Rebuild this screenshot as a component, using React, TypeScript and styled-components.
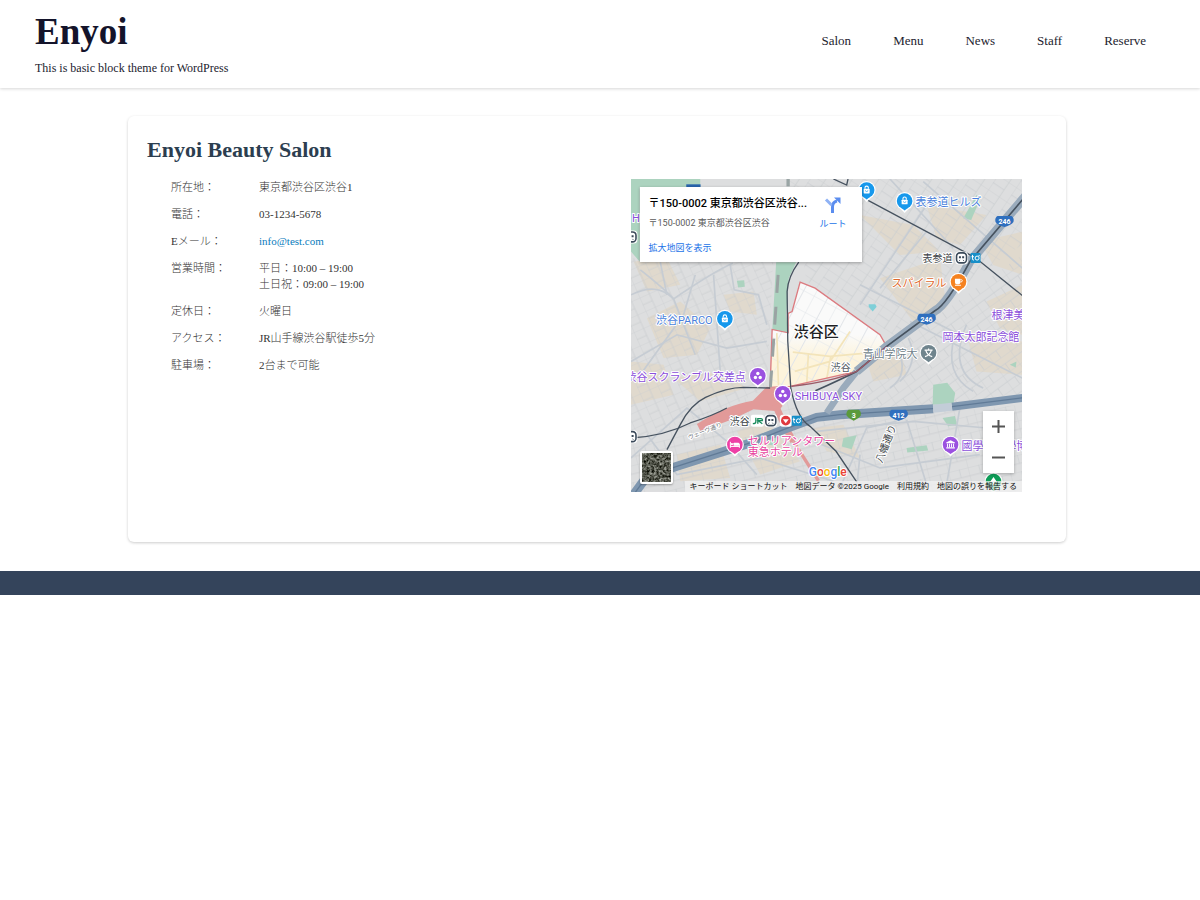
import React from "react";
import styled, { createGlobalStyle } from "styled-components";

const serif = '"Liberation Serif", "Noto Sans CJK JP", serif';
const sans = 'Roboto, "Noto Sans CJK JP", sans-serif';

const GlobalStyle = createGlobalStyle`
  *, *::before, *::after { box-sizing: border-box; }
  body {
    margin: 0;
    background: #fff;
    color: #333;
    font-family: ${serif};
  }
`;

const Header = styled.header`
  display: flex;
  justify-content: space-between;
  align-items: center;
  padding: 9px 54px 12px 35px;
  background: #fff;
  box-shadow: 0 1px 3px rgba(0, 0, 0, 0.16);
`;

const Brand = styled.div`
  display: flex;
  flex-direction: column;
  gap: 6px;
`;

const SiteTitle = styled.p`
  margin: 0;
  font-size: 37px;
  line-height: 45px;
  font-weight: 700;
  color: #14142b;
`;

const Tagline = styled.p`
  margin: 0;
  font-size: 12px;
  line-height: 16px;
  color: #22222e;
`;

const Nav = styled.nav`
  padding-bottom: 6px;
`;

const NavList = styled.ul`
  display: flex;
  gap: 42px;
  margin: 0;
  padding: 0;
  list-style: none;
`;

const NavLink = styled.a`
  font-size: 13px;
  line-height: 16px;
  color: #22222e;
  text-decoration: none;
`;

const Main = styled.main`
  padding: 28px 134px 29px 128px;
`;

const Card = styled.section`
  padding: 20px 0 50px;
  border-radius: 6px;
  background: #fff;
  box-shadow: 0 1px 3px rgba(0, 0, 0, 0.2);
`;

const CardTitle = styled.h1`
  margin: 0 0 15px;
  padding: 0 19px;
  font-size: 22px;
  line-height: 28px;
  font-weight: 700;
  color: #2c3e50;
`;

const CardBody = styled.div`
  display: grid;
  grid-template-columns: minmax(0, 1fr) 46%;
  padding: 0 44px 0 43px;
`;

const Details = styled.dl`
  display: flex;
  flex-direction: column;
  gap: 11px;
  margin: 0;
`;

const DetailRow = styled.div`
  display: grid;
  grid-template-columns: 88px 1fr;
  font-size: 11px;
  line-height: 16px;
`;

const Term = styled.dt`
  font-weight: 300;
  color: #333;
`;

const Value = styled.dd`
  margin: 0;
  font-weight: 300;
  color: #333;
`;

const MailLink = styled.a`
  color: #0a7cbd;
  text-decoration: none;
`;

const MapFrame = styled.div`
  position: relative;
  aspect-ratio: 392 / 313;
  overflow: hidden;
  background: #dedfe0;
  font-family: ${sans};
`;

const MapCanvas = styled.svg`
  display: block;
  width: 100%;
  height: 100%;
`;

const PlaceCard = styled.div`
  position: absolute;
  top: 8px;
  left: 9px;
  display: flex;
  justify-content: space-between;
  width: 222px;
  height: 75px;
  padding: 9px 15px 0 9px;
  background: #fff;
  box-shadow: 0 1px 3px rgba(0, 0, 0, 0.3);
`;

const PlaceText = styled.div`
  display: flex;
  flex-direction: column;
  align-items: flex-start;
  white-space: nowrap;
`;

const PlaceName = styled.strong`
  font-size: 11px;
  line-height: 16px;
  font-weight: 500;
  color: #000;
`;

const PlaceAddress = styled.span`
  margin-top: 3px;
  font-size: 9px;
  line-height: 16px;
  color: #5b5b5b;
`;

const MapLink = styled.a`
  font-size: 9px;
  line-height: 16px;
  color: #1a73e8;
  text-decoration: none;
`;

const LargerMapLink = styled(MapLink)`
  margin-top: 9px;
`;

const RouteLink = styled(MapLink)`
  display: flex;
  flex-direction: column;
  align-items: center;
  gap: 2px;
`;

const ZoomControls = styled.div`
  position: absolute;
  right: 8px;
  bottom: 19px;
  width: 31px;
  background: #fff;
  box-shadow: 0 1px 3px rgba(0, 0, 0, 0.25);
`;

const ZoomButton = styled.button`
  display: flex;
  align-items: center;
  justify-content: center;
  width: 31px;
  height: 31px;
  padding: 0;
  border: 0;
  background: transparent;
`;

const SatelliteButton = styled.button`
  position: absolute;
  left: 9px;
  bottom: 8px;
  width: 33px;
  height: 33px;
  padding: 0;
  overflow: hidden;
  border: 2px solid #fff;
  border-radius: 2px;
  background: #55564f;
  box-shadow: 0 1px 2px rgba(0, 0, 0, 0.3);
`;

const Attribution = styled.div`
  position: absolute;
  right: 0;
  bottom: 0;
  display: flex;
  gap: 8px;
  padding: 0 5px;
  background: rgba(242, 242, 242, 0.72);
  font-size: 8px;
  line-height: 11px;
  color: #111;
  white-space: nowrap;
`;

const ShortcutButton = styled.button`
  padding: 0;
  border: 0;
  background: transparent;
  font: inherit;
  color: inherit;
`;

const AttributionLink = styled.a`
  color: inherit;
  text-decoration: none;
`;

const Footer = styled.footer`
  height: 24px;
  background: #34445b;
`;

const MapText = styled.text<{ $size?: number; $color: string; $weight?: number }>`
  font-family: ${sans};
  font-size: ${(p) => p.$size ?? 11}px;
  font-weight: ${(p) => p.$weight ?? 400};
  fill: ${(p) => p.$color};
  stroke: #fff;
  stroke-width: 2px;
  stroke-linejoin: round;
  paint-order: stroke;
`;

const ShieldText = styled.text`
  font-family: ${sans};
  font-size: 7px;
  font-weight: 700;
  fill: #fff;
  text-anchor: middle;
`;

type Glyph = "bag" | "cup" | "school" | "dots" | "bed" | "museum" | "tree";

const glyphs: Record<Glyph, React.ReactNode> = {
  bag: (
    <>
      <rect x="-3" y="-1.2" width="6" height="4.6" rx=".6" fill="#fff" />
      <path d="M-1.7-1.2v-1a1.7 1.7 0 0 1 3.4 0v1" fill="none" stroke="#fff" strokeWidth="1.1" />
      <path d="M-1.2.4a1.2 1.2 0 0 0 2.4 0" fill="none" stroke="#1698ec" strokeWidth=".7" />
    </>
  ),
  cup: (
    <>
      <path d="M-3.6-3h5.4v3.6a1.8 1.8 0 0 1-1.8 1.8h-1.8A1.8 1.8 0 0 1-3.6.6zM-3.6 3h6v.9h-6z" fill="#fff" />
      <path d="M1.8-2.2h1a1 1 0 0 1 1 1c0 .8-.5 1.3-1.3 1.3h-.7" fill="none" stroke="#fff" strokeWidth=".9" />
    </>
  ),
  school: (
    <path
      d="M-4-2.6h8M0-4.2v1.6M-2.8-2.4C-1.8 1 .5 3 3.6 3.8M2.8-2.4C1.8 1-.5 3-3.6 3.8"
      fill="none"
      stroke="#fff"
      strokeWidth="1.2"
    />
  ),
  dots: (
    <>
      <circle cy="-2.3" r="1.7" fill="#fff" />
      <circle cx="-2.4" cy="1.8" r="1.7" fill="#fff" />
      <circle cx="2.4" cy="1.8" r="1.7" fill="#fff" />
    </>
  ),
  bed: (
    <>
      <path d="M-4.5-2.8v6M-4.5 1.8h9M4.5-.8v4" stroke="#fff" strokeWidth="1" />
      <rect x="-1.4" y="-2" width="5.6" height="3" rx=".7" fill="#fff" />
      <circle cx="-2.9" cy="-.5" r="1.1" fill="#fff" />
    </>
  ),
  museum: (
    <>
      <path d="M0-4.5l4.4 2.4v.8h-8.8v-.8zM-4.3 2.7h8.6v1.2h-8.6z" fill="#fff" />
      <path d="M-3-1v3.6M-1-1v3.6M1-1v3.6M3-1v3.6" stroke="#fff" strokeWidth="1" />
    </>
  ),
  tree: <path d="M0-4.5l3.5 5h-2.6v3h-1.8v-3h-2.6z" fill="#fff" />,
};

const pins: { x: number; y: number; color: string; glyph: Glyph }[] = [
  { x: 236, y: 11, color: "#1698ec", glyph: "bag" },
  { x: 274, y: 22, color: "#1698ec", glyph: "bag" },
  { x: 94, y: 140, color: "#1698ec", glyph: "bag" },
  { x: 328, y: 103, color: "#f58220", glyph: "cup" },
  { x: 298, y: 174, color: "#6f848d", glyph: "school" },
  { x: 127, y: 197, color: "#9b51e0", glyph: "dots" },
  { x: 152, y: 215, color: "#9b51e0", glyph: "dots" },
  { x: 104, y: 266, color: "#ee3fa6", glyph: "bed" },
  { x: 320, y: 266, color: "#9b51e0", glyph: "museum" },
  { x: 363, y: 303, color: "#0f9d58", glyph: "tree" },
];

function Pin({ x, y, color, glyph }: (typeof pins)[number]) {
  return (
    <g transform={`translate(${x} ${y})`}>
      <path d="M-6 6L0 12L6 6z" fill="#fff" />
      <circle r="9" fill="#fff" />
      <circle r="7.8" fill={color} />
      <path d="M-3.5 6.8L0 9.5L3.5 6.8z" fill={color} />
      {glyphs[glyph]}
    </g>
  );
}

function Shield({ x, y, label, green }: { x: number; y: number; label: string; green?: boolean }) {
  const half = green ? 7 : 9;
  return (
    <g transform={`translate(${x} ${y})`}>
      <path
        d={`M${-half + 2} -5H${half - 2}Q${half + 1} -3 ${half} 1Q${half - 2} 4 0 6Q${-half + 2} 4 ${-half} 1Q${-half - 1} -3 ${-half + 2} -5z`}
        fill={green ? "#5a9a3b" : "#2f6fbe"}
      />
      <ShieldText y="3">{label}</ShieldText>
    </g>
  );
}

function MetroMark({ x, y }: { x: number; y: number }) {
  return (
    <g transform={`translate(${x} ${y})`}>
      <rect x="-6.5" y="-6.5" width="13" height="13" rx="4" fill="#fff" />
      <rect x="-5" y="-5" width="10" height="10" rx="3.4" fill="#fff" stroke="#3b4a5a" strokeWidth="1.6" />
      <path d="M-2.6-1.6h2v2h-2zM.6-1.6h2v2h-2z" fill="#3b4a5a" />
      <path d="M-2.4 3.2l.8-1.2M2.4 3.2l-.8-1.2" stroke="#3b4a5a" strokeWidth=".8" />
    </g>
  );
}

function TokyuMark({ x, y }: { x: number; y: number }) {
  return (
    <g transform={`translate(${x} ${y})`}>
      <rect x="-5" y="-5" width="10" height="10" rx="1" fill="#168fc9" />
      <path d="M-3-3v4q0 1.4 1.4 1.2M-4-1.200h2.400" fill="none" stroke="#fff" strokeWidth="1" />
      <circle cx="1.600" cy=".2" r="2" fill="none" stroke="#fff" strokeWidth="1" />
      <path d="M3.600-3v1.400" stroke="#fff" strokeWidth="1" />
    </g>
  );
}

const blocks = [
  { d: "M0 250H440L420 640L300 700L0 800z", fill: "url(#streetsA)" },
  { d: "M480 0H1200V200L800 480L540 320z", fill: "url(#streetsB)" },
  { d: "M800 520L1200 230V680L640 720z", fill: "url(#streetsC)" },
  { d: "M0 800L430 640L560 740L1200 690V960H0z", fill: "url(#streetsD)" },
];

const sand = [
  "M20 260L120 250L160 330L60 350z",
  "M60 430L160 380L250 460L210 540L110 550z",
  "M12 560L110 570L140 660L12 690z",
  "M140 610L280 590L360 640L220 680z",
  "M290 360L380 350L390 420L310 410z",
  "M700 120L860 150L940 230L820 240z",
  "M900 90L1080 120L1000 210L930 190z",
  "M760 310L940 250L960 400L860 440z",
  "M1060 200L1188 170V300L1100 270z",
  "M1080 380L1188 330V480L1120 460z",
  "M330 770L420 740L520 860L400 900z",
  "M150 840L280 810L310 910L160 920z",
  "M560 760L650 750L700 850L600 830z",
  "M1020 480L1188 500V600L1050 590z",
  "M720 560L820 520L840 600L740 620z",
];

const parks = [
  "M12 12H220V36H38V260L12 230z",
  "M448 262H508L486 310L478 420L484 475H436z",
  "M1010 130L1050 60L1062 70L1034 135z",
  "M920 630L962 624L986 655L980 690L918 690z",
  "M948 730L985 724L992 750L965 755z",
  "M330 318L352 316L354 336L334 338z",
  "M410 775L455 760L446 812L416 810z",
  "M650 790L690 782L675 824L645 816z",
  "M840 820L900 812L905 828L842 834z",
  "M1150 570L1170 560L1168 578z",
];

const lanes = [
  "M40 285Q110 340 140 372Q260 290 318 265",
  "M12 360Q90 320 140 372L205 540",
  "M310 270L322 345L395 360L420 450",
  "M12 560L150 480L300 520L420 500",
  "M40 600L170 420L205 300",
  "M100 262L120 360M260 300L280 590",
  "M790 12L980 220M900 170L760 340",
  "M700 330L1000 480M850 440L1188 610",
  "M890 20L1188 280M700 390L920 60",
  "M820 620Q880 560 845 490M790 640Q850 600 812 520",
  "M985 480Q950 600 1040 650M1020 450Q960 590 1070 640",
  "M12 850L180 700L300 800L390 900",
  "M60 780L150 900L400 850L620 920",
  "M570 770L860 740L1080 760",
  "M640 940L720 760L810 740M840 735L900 930",
  "M560 800L760 880L1060 840",
  "M1000 700L960 930M700 840L690 940",
];

const wardOutline =
  "M520 322L565 340L760 480L780 515L690 590L490 635L430 638L436 464L484 474L484 416L496 410z";

function DistrictMap() {
  return (
    <MapCanvas viewBox="0 0 392 313" preserveAspectRatio="xMidYMid slice" role="img" aria-label="渋谷区の地図">
      <defs>
        <pattern id="streetsA" width="58" height="44" patternUnits="userSpaceOnUse" patternTransform="rotate(-24)">
          <path d="M0 0H58M0 0V44M0 24H32M32 0V44" fill="none" stroke="#c9cccf" strokeWidth="2" />
        </pattern>
        <pattern id="streetsB" width="66" height="52" patternUnits="userSpaceOnUse" patternTransform="rotate(34)">
          <path d="M0 0H66M0 0V52M0 28H40M40 0V52" fill="none" stroke="#c9cccf" strokeWidth="2" />
        </pattern>
        <pattern id="streetsC" width="62" height="48" patternUnits="userSpaceOnUse" patternTransform="rotate(-36)">
          <path d="M0 0H62M0 0V48M0 22H62M28 22V48" fill="none" stroke="#c9cccf" strokeWidth="2" />
        </pattern>
        <pattern id="streetsD" width="60" height="50" patternUnits="userSpaceOnUse" patternTransform="rotate(-14)">
          <path d="M0 0H60M0 0V50M34 0V26M0 26H60" fill="none" stroke="#c9cccf" strokeWidth="2" />
        </pattern>
        <pattern id="wardStreets" width="74" height="56" patternUnits="userSpaceOnUse" patternTransform="rotate(28)">
          <path d="M0 0H74M0 0V56M40 0V56" fill="none" stroke="#e2e5e9" strokeWidth="3" />
        </pattern>
        <linearGradient id="ward" x1="0" y1="0" x2="0" y2="1">
          <stop offset=".5" stopColor="#fafafa" />
          <stop offset=".72" stopColor="#fdf4dc" />
        </linearGradient>
      </defs>

      <rect width="392" height="313" fill="#dddedf" />
      {/* Terrain and roads are drawn on a grid three times finer than the labels */}
      <g transform="translate(-4 -4) scale(.33333)">
        {sand.map((d) => (
          <path key={d} d={d} fill="#e0d9cd" />
        ))}
        {blocks.map((b) => (
          <path key={b.fill} d={b.d} fill={b.fill} />
        ))}
        {parks.map((d) => (
          <path key={d} d={d} fill="#acd3bf" />
        ))}
        <path d="M726 388h20l4 8-12 14-12-14z" fill="#7fcfd8" />
        <g fill="none" stroke="#c6ccd3" strokeWidth="5">
          {lanes.map((d) => (
            <path key={d} d={d} />
          ))}
        </g>

        <path d={wardOutline} fill="url(#ward)" />
        <path d={wardOutline} fill="url(#wardStreets)" />
        <g fill="none" stroke="#f3e4ba" strokeWidth="5">
          <path d="M498 532L610 545L720 535M504 590L610 560L670 470M540 625L545 535M600 612L612 545M450 475L455 632" />
        </g>
        <path d={wardOutline} fill="none" stroke="#dc7b80" strokeWidth="4" />

        <path d="M454 300L430 650" stroke="#9aa3a3" strokeWidth="9" strokeDasharray="54 42" />
        <path d="M484 12V34" stroke="#9aa5a5" strokeWidth="10" />
        <path d="M210 748Q300 690 378 678L420 636L452 640L470 690L455 710L380 704Q300 745 220 768z" fill="#e29a99" />
        <path d="M445 690L478 762L500 800" fill="none" stroke="#e29a99" strokeWidth="20" />
        <path d="M500 800L575 918" fill="none" stroke="#e29a99" strokeWidth="10" />

        <g fill="none" stroke="#7f97b0">
          <path d="M20 960L60 905L150 875L370 805L470 765L570 728L640 720L920 702" strokeWidth="27" />
          <path d="M976 696L1200 668" strokeWidth="24" />
          <path d="M1200 60L1030 260Q960 390 925 408L780 515L690 590" strokeWidth="27" stroke="#9aabbc" />
          <path d="M690 590L650 640L600 715" strokeWidth="20" stroke="#9aabbc" />
        </g>
        <g fill="none" stroke="#617b97" strokeWidth="4">
          <path d="M20 960L60 905L150 875L370 805L470 765L570 728L640 720L920 702" />
          <path d="M976 696L1200 668" />
        </g>
        <path d="M920 702L976 696" stroke="#c3cdd8" strokeWidth="24" />
        <path d="M178 32H221" stroke="#2764ac" strokeWidth="8" />

        <g fill="none" stroke="#46525f" strokeWidth="4">
          <path d="M516 262Q484 305 481 350L483 500L492 640Q510 730 550 755L628 830L690 922" />
          <path d="M12 790Q110 785 190 745Q260 722 300 700" />
          <path d="M120 825L160 750Q190 690 236 668Q300 638 350 638L430 640" />
          <path d="M620 12L660 30L664 12M720 74L1046 248L1200 372" />
          <path d="M1200 60L1030 260Q960 390 925 408L780 515L690 590Q640 615 566 648" strokeWidth="5" />
          <path d="M494 635Q620 620 690 590L780 515" stroke="#9a5a67" />
        </g>
      </g>

      {pins.map((p) => (
        <Pin key={`${p.x}-${p.y}`} {...p} />
      ))}

      <Shield x={374} y={42} label="246" />
      <Shield x={296} y={140} label="246" />
      <Shield x={268} y={236} label="412" />
      <Shield x={223} y={236} label="3" green />

      <MetroMark x={331} y={79} />
      <TokyuMark x={345} y={79} />
      <MetroMark x={0} y={58} />
      <MetroMark x={0} y={258} />
      <rect x="120" y="236" width="13" height="12" rx="2" fill="#fff" />
      <path d="M125 239v4q0 2-3 2M127 245v-5h3q2 0 1.500 2h-4l4 3" fill="none" stroke="#188a5b" strokeWidth="1.300" />
      <MetroMark x={140} y={242} />
      <rect x="149" y="236" width="12" height="12" rx="3" fill="#fff" />
      <circle cx="155" cy="242" r="4.800" fill="#e0393e" />
      <path d="M152 240.500h6l-3 4z" fill="#fff" />
      <TokyuMark x={166} y={242} />

      <MapText x="285" y="27" $color="#4a7fdc">表参道ヒルズ</MapText>
      <MapText x="292" y="83" $size={10} $color="#3b3f46">表参道</MapText>
      <MapText x="261" y="108" $color="#df6a2c">スパイラル</MapText>
      <MapText x="25" y="145" $color="#4a7fdc">渋谷PARCO</MapText>
      <MapText x="163" y="158" $size={15} $weight={500} $color="#202124">渋谷区</MapText>
      <MapText x="200" y="192" $size={10} $color="#555b63">渋谷</MapText>
      <MapText x="232" y="179" $color="#6f7f8a">青山学院大</MapText>
      <MapText x="312" y="162" $color="#8b4fdb">岡本太郎記念館</MapText>
      <MapText x="361" y="140" $color="#8b4fdb">根津美術館</MapText>
      <MapText x="115" y="202" textAnchor="end" $color="#8b4fdb">渋谷スクランブル交差点</MapText>
      <MapText x="164" y="221" $color="#8b4fdb">SHIBUYA SKY</MapText>
      <MapText x="99" y="246" $size={10} $color="#3b3f46">渋谷</MapText>
      <MapText x="117" y="266" $color="#e8459f">セルリアンタワー</MapText>
      <MapText x="117" y="277" $color="#e8459f">東急ホテル</MapText>
      <MapText x="331" y="271" $color="#8b4fdb">國學院大學博物館</MapText>
      <MapText x="1" y="43" $color="#8b4fdb">H</MapText>
      <MapText transform="translate(251 285) rotate(-68)" $size={10} $color="#3b3f46">八幡通り</MapText>
      <MapText transform="translate(58 261) rotate(-22)" $size={6} $color="#6d7278">ウェーヴ通り</MapText>
      <MapText x="178" y="297" $size={12} $weight={500} $color="#4285f4">
        G<tspan fill="#ea4335">o</tspan>
        <tspan fill="#fbbc04">o</tspan>
        <tspan fill="#4285f4">g</tspan>
        <tspan fill="#34a853">l</tspan>
        <tspan fill="#ea4335">e</tspan>
      </MapText>
    </MapCanvas>
  );
}

function RouteIcon() {
  return (
    <svg width="18" height="18" viewBox="0 0 18 18" aria-hidden="true">
      <path d="M8.500 17V11Q8.500 6 13 5" fill="none" stroke="#5b8def" strokeWidth="3" />
      <path d="M10 1.500h6.500v6.500z" fill="#5b8def" />
      <path d="M2 3.500L7.500 9" stroke="#8fb2f5" strokeWidth="3" />
    </svg>
  );
}

function SatelliteTexture() {
  return (
    <svg width="29" height="29" viewBox="0 0 29 29" aria-hidden="true">
      <filter id="rooftops" x="0" y="0" width="100%" height="100%" colorInterpolationFilters="sRGB">
        <feTurbulence type="fractalNoise" baseFrequency=".4" numOctaves="3" seed="8" />
        <feColorMatrix values="1 .2 0 0 -.26 1 .2 0 0 -.25 1 .2 0 0 -.29 0 0 0 0 1" />
      </filter>
      <rect width="29" height="29" filter="url(#rooftops)" />
    </svg>
  );
}

const navItems = ["Salon", "Menu", "News", "Staff", "Reserve"];

const details: { term: React.ReactNode; value: React.ReactNode }[] = [
  { term: "所在地：", value: "東京都渋谷区渋谷1" },
  { term: "電話：", value: "03-1234-5678" },
  { term: <><b>E</b>メール：</>, value: <MailLink href="mailto:info@test.com">info@test.com</MailLink> },
  { term: "営業時間：", value: <>平日：10:00 – 19:00<br />土日祝：09:00 – 19:00</> },
  { term: "定休日：", value: "火曜日" },
  { term: "アクセス：", value: "JR山手線渋谷駅徒歩5分" },
  { term: "駐車場：", value: "2台まで可能" },
];

export default function App() {
  return (
    <>
      <GlobalStyle />
      <Header>
        <Brand>
          <SiteTitle>Enyoi</SiteTitle>
          <Tagline>This is basic block theme for WordPress</Tagline>
        </Brand>
        <Nav aria-label="Main">
          <NavList>
            {navItems.map((item) => (
              <li key={item}>
                <NavLink href={`#${item.toLowerCase()}`}>{item}</NavLink>
              </li>
            ))}
          </NavList>
        </Nav>
      </Header>
      <Main>
        <Card>
          <CardTitle>Enyoi Beauty Salon</CardTitle>
          <CardBody>
            <Details>
              {details.map((row, i) => (
                <DetailRow key={i}>
                  <Term lang="ja">{row.term}</Term>
                  <Value lang="ja">{row.value}</Value>
                </DetailRow>
              ))}
            </Details>
            <MapFrame lang="ja">
              <DistrictMap />
              <PlaceCard>
                <PlaceText>
                  <PlaceName>〒150-0002 東京都渋谷区渋谷...</PlaceName>
                  <PlaceAddress>〒150-0002 東京都渋谷区渋谷</PlaceAddress>
                  <LargerMapLink href="#map">拡大地図を表示</LargerMapLink>
                </PlaceText>
                <RouteLink href="#route">
                  <RouteIcon />
                  ルート
                </RouteLink>
              </PlaceCard>
              <SatelliteButton type="button" aria-label="航空写真">
                <SatelliteTexture />
              </SatelliteButton>
              <Attribution>
                <ShortcutButton type="button">キーボード ショートカット</ShortcutButton>
                <span>地図データ ©2025 Google</span>
                <AttributionLink href="#terms">利用規約</AttributionLink>
                <AttributionLink href="#report">地図の誤りを報告する</AttributionLink>
              </Attribution>
              <ZoomControls>
                <ZoomButton type="button" aria-label="拡大">
                  <svg width="13" height="13" viewBox="0 0 13 13" aria-hidden="true">
                    <path d="M0 6.500H13M6.500 0V13" stroke="#555" strokeWidth="2" />
                  </svg>
                </ZoomButton>
                <ZoomButton type="button" aria-label="縮小">
                  <svg width="13" height="13" viewBox="0 0 13 13" aria-hidden="true">
                    <path d="M0 6.500H13" stroke="#555" strokeWidth="2" />
                  </svg>
                </ZoomButton>
              </ZoomControls>
            </MapFrame>
          </CardBody>
        </Card>
      </Main>
      <Footer />
    </>
  );
}
